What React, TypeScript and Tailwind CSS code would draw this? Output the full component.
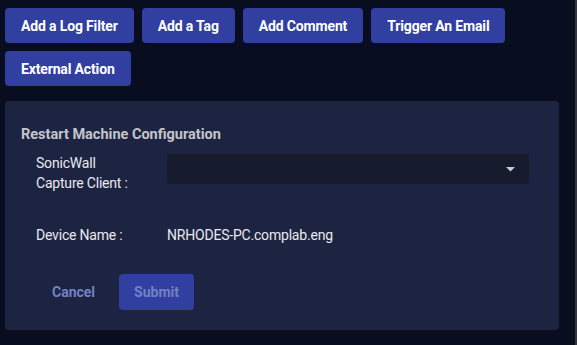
import React from "react";

const btn =
  "h-[35px] px-4 rounded-[4px] bg-[#3140a0] text-white text-[14px] font-bold tracking-[-0.15px] leading-none flex items-center";

export default function App() {
  return (
    <div
      className="w-[577px] h-[345px] bg-[#080d20] overflow-hidden relative"
      style={{ fontFamily: "Roboto, 'Liberation Sans', sans-serif" }}
    >
      <div className="absolute right-0 top-0 w-[2px] h-full bg-[#34363c]" />
      <div className="pl-[5px] pt-[8px] w-[563px]">
        <div className="flex flex-wrap gap-x-[8px] gap-y-[8px]">
          <button className={btn}>Add a Log Filter</button>
          <button className={btn}>Add a Tag</button>
          <button className={btn}>Add Comment</button>
          <button className={btn}>Trigger An Email</button>
          <button className={btn}>External Action</button>
        </div>
        <div className="mt-[15px] w-[554px] h-[229px] rounded-[4px] bg-[#1d2442] pt-[24px] pl-[16px]">
          <div className="text-[14.5px] leading-[20px] font-bold text-[#c4c5cc]">
            Restart Machine Configuration
          </div>
          <div className="mt-[8px] pl-[15px] flex items-start">
            <div className="w-[131px] text-[14px] leading-[20px] tracking-[-0.2px] text-[#e8e9ee]">
              SonicWall
              <br />
              Capture Client :
            </div>
            <div className="mt-[1px] w-[362px] h-[30px] rounded-[4px] bg-[#161b2e] flex items-center justify-end pr-[14px]">
              <svg width="9" height="5" viewBox="0 0 9 5">
                <path d="M0 0 L9 0 L4.5 4.5 Z" fill="#c9cbd3" />
              </svg>
            </div>
          </div>
          <div className="mt-[32px] pl-[15px] flex items-center text-[14px] leading-[20px] tracking-[-0.2px] text-[#e8e9ee]">
            <div className="w-[131px]">Device Name :</div>
            <div>NRHODES-PC.complab.eng</div>
          </div>
          <div className="mt-[29px] pl-[15px] flex gap-[8px]">
            <button className="h-[36px] px-4 text-[14px] font-bold text-[#7481c4] flex items-center">
              Cancel
            </button>
            <button className="h-[36px] w-[75px] justify-center rounded-[4px] bg-[#3140a0] text-[14px] font-bold text-[#7481c4] flex items-center">
              Submit
            </button>
          </div>
        </div>
      </div>
    </div>
  );
}
